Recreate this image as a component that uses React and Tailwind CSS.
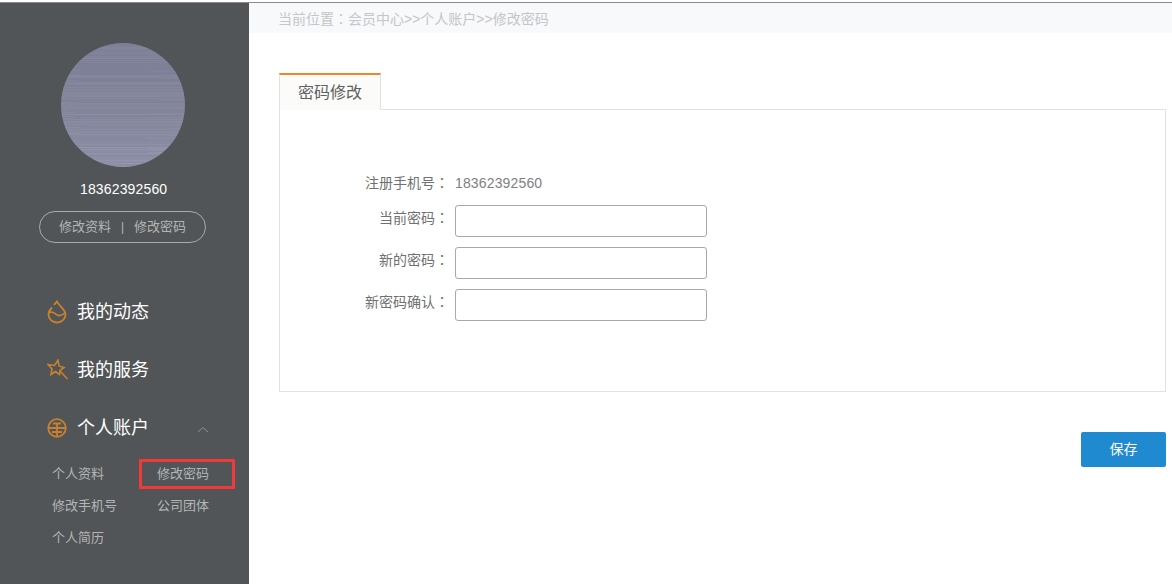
const cjk = "font-['Liberation_Sans','Noto_Sans_CJK_SC',sans-serif]";

// 全角冒号居中，SC 字形偏左
function Colon() {
  return <span className="font-['Noto_Sans_CJK_TC',sans-serif]">：</span>;
}

// 头像的拉丝纹理
function Avatar() {
  const lines = [];
  for (let i = 0; i < 124; i++) {
    const n = Math.abs(Math.sin(i * 12.9898) * 43758.5453) % 1;
    const m = Math.abs(Math.sin(i * 78.233) * 12543.123) % 1;
    lines.push(
      <rect key={i} x={m * 50 - 30} y={i} width={110 + m * 80} height="1" fill={n > 0.5 ? "#6f7186" : "#a9aabd"} opacity={n * 0.22} />
    );
  }
  return (
    <svg width="124" height="124" viewBox="0 0 124 124" className="block">
      <defs>
        <linearGradient id="av" x1="0" y1="0" x2="0" y2="1">
          <stop offset="0" stopColor="#7f8198" />
          <stop offset="0.5" stopColor="#85879d" />
          <stop offset="1" stopColor="#9496ae" />
        </linearGradient>
        <clipPath id="avc">
          <circle cx="62" cy="62" r="62" />
        </clipPath>
      </defs>
      <g clipPath="url(#avc)">
        <rect width="124" height="124" fill="url(#av)" />
        {lines}
      </g>
    </svg>
  );
}

function DropIcon() {
  return (
    <svg width="20" height="24" viewBox="0 0 20 24" fill="none" stroke="#cb802c" strokeWidth="1.8">
      <path d="M7 5 C8 3.5 9 2.5 10 1.5 C12 6 18.5 9.5 18.5 14.5 a8.5 8 0 0 1 -17 0 C1.5 11.5 3 9.5 5 7.5" />
      <path d="M2.5 12.5 C7 10.5 8 15 12 15.5 C15 15.8 17 14 18.4 12.5" />
    </svg>
  );
}

function StarIcon() {
  return (
    <svg width="22" height="22" viewBox="0 0 22 22" fill="none" stroke="#cb802c" strokeWidth="1.6">
      <path d="M1 5.5 L7.5 6.5 L11 1.2 L12 7 L17 8.5 L13 11.5 L12.5 15.5 L8.5 12.5 L4 15.5 L5 10 Z" />
      <path d="M13 12 L20.5 20" />
    </svg>
  );
}

function GlobeIcon() {
  return (
    <svg width="20" height="20" viewBox="0 0 20 20" fill="none" stroke="#cb802c" strokeWidth="1.8">
      <circle cx="10" cy="10" r="8.8" />
      <path d="M1.5 10 H18.5 M6 5.5 H14 M10 5.5 V18.5 M5 14 H15" />
    </svg>
  );
}

function NavItem({ icon, label, children }) {
  return (
    <div className="flex items-center h-[58px] pl-[47px] text-[18px] text-white">
      <span className="w-[30px] flex items-center">{icon}</span>
      <span>{label}</span>
      {children}
    </div>
  );
}

function Field({ label, children }) {
  return (
    <div className="flex items-center h-[42px]">
      <label className="w-[175px] mb-[6px] text-right text-[14px] text-[#707070] pr-[6px]">
        {label}
        <Colon />
      </label>
      {children}
    </div>
  );
}

export default function App() {
  return (
    <div className={`${cjk} w-[1172px] h-[584px] overflow-hidden bg-white pt-[2px]`}>
      <div className="h-full border-t border-[#8a8c90] flex">
        {/* 左侧菜单 */}
        <aside className="w-[249px] shrink-0 bg-[#515557] flex flex-col">
          <div className="pt-[40px] pl-[61px]">
            <Avatar />
          </div>
          <div className="mt-[13px] pl-[80px] text-[14px] tracking-[0.15px] leading-[18px] text-white">18362392560</div>
          <div className="mt-[13px] ml-[39px] w-[167px] h-[32px] rounded-full border border-[#a8aaab] flex items-center justify-center text-[13px] text-[#b3b5b6]">
            <span>修改资料</span>
            <span className="mx-[10px] text-[12px]">|</span>
            <span>修改密码</span>
          </div>

          <nav className="mt-[40px]">
            <NavItem icon={<DropIcon />} label="我的动态" />
            <NavItem icon={<StarIcon />} label="我的服务" />
            <NavItem icon={<GlobeIcon />} label="个人账户">
              <svg width="12" height="7" viewBox="0 0 12 7" fill="none" stroke="#8f9395" strokeWidth="1" className="ml-[48px] mt-[3px]">
                <path d="M1 6 L6 1.5 L11 6" />
              </svg>
            </NavItem>
          </nav>

          <div className="mt-[1px] ml-[52px] grid grid-cols-[105px_auto] auto-rows-[32px] items-center text-[13px] text-[#b3b5b6]">
            <span>个人资料</span>
            <span className="relative">
              修改密码
              <span className="absolute left-[-18px] top-[-5px] w-[96px] h-[30px] border-[3px] border-[#f03a3a]"></span>
            </span>
            <span>修改手机号</span>
            <span>公司团体</span>
            <span>个人简历</span>
          </div>
        </aside>

        {/* 主体 */}
        <main className="flex-1 min-w-0">
          <div className="h-[30px] bg-[#f8f9fb] pl-[29px] text-[14px] leading-[30px] text-[#c4c6c9]">
            当前位置
            <Colon />
            会员中心&gt;&gt;个人账户&gt;&gt;修改密码
          </div>

          <div className="mt-[40px] ml-[30px] mr-[6px]">
            <div className="relative z-10 w-[102px] h-[37px] border-t-2 border-t-[#e8892b] border-x border-x-[#e2e2e2] bg-[#fbfbf9] text-center text-[16px] leading-[36px] text-[#606060]">
              密码修改
            </div>
            <div className="h-[283px] border border-[#e2e2e2] pt-[52px] -mt-px">
              <div className="flex items-center h-[42px]">
                <label className="w-[175px] text-right text-[14px] text-[#707070] pr-[6px]">
                  注册手机号
                  <Colon />
                </label>
                <span className="text-[14px] tracking-[0.15px] text-[#808080]">18362392560</span>
              </div>
              <div className="-mt-[4px]">
                <Field label="当前密码">
                  <input type="password" className="w-[252px] h-[32px] rounded-[3px] border border-[#a9a9a9] bg-white" />
                </Field>
                <Field label="新的密码">
                  <input type="password" className="w-[252px] h-[32px] rounded-[3px] border border-[#a9a9a9] bg-white" />
                </Field>
                <Field label="新密码确认">
                  <input type="password" className="w-[252px] h-[32px] rounded-[3px] border border-[#a9a9a9] bg-white" />
                </Field>
              </div>
            </div>
            <div className="flex justify-end mt-[40px]">
              <button className="w-[85px] h-[35px] rounded-[2px] bg-[#1f8acf] text-white text-[14px]">保存</button>
            </div>
          </div>
        </main>
      </div>
    </div>
  );
}
